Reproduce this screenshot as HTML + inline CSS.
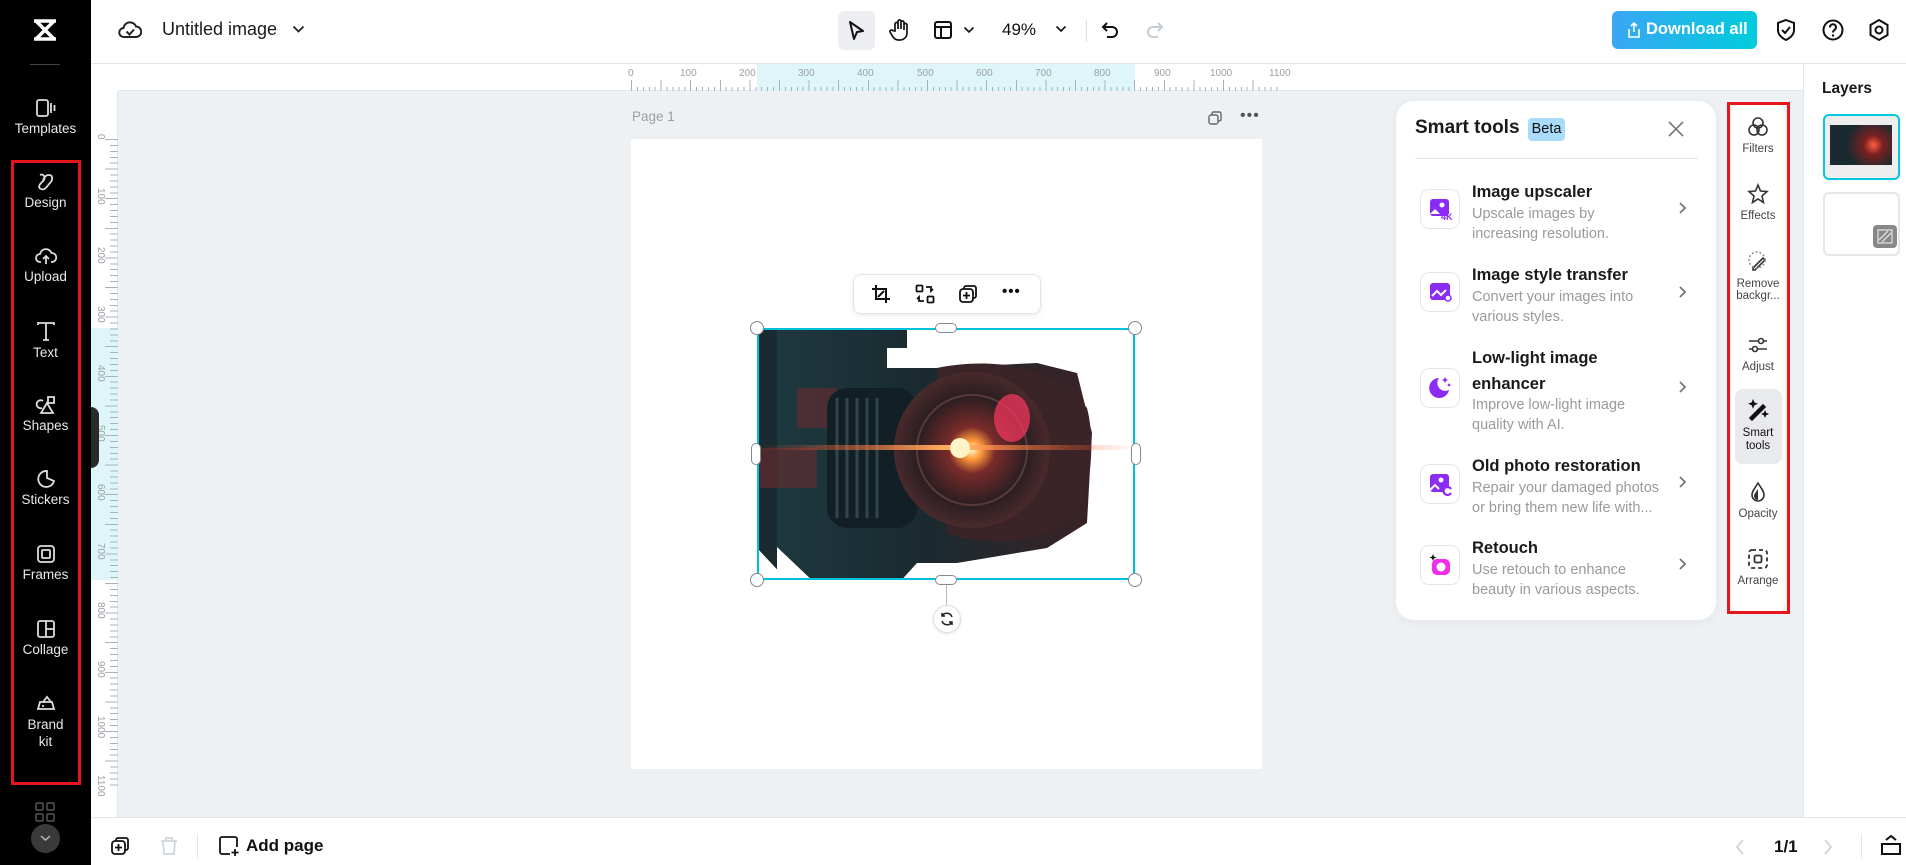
<!DOCTYPE html>
<html><head><meta charset="utf-8">
<style>
*{box-sizing:border-box;margin:0;padding:0}
body{width:1906px;height:865px;overflow:hidden;position:relative;background:#fff;font-family:"Liberation Sans",sans-serif;color:#1a1a1a}
.a{position:absolute}
.side{left:0;top:0;width:91px;height:865px;background:#000}
.si{position:absolute;left:0;width:91px;text-align:center;color:#e8e8e8;font-size:13.5px}
.si svg{display:block;margin:0 auto 3px}
.rl{font-size:10px;color:#9aa0a6;position:absolute}
.hr{left:118px;top:64px;width:1685px;height:27px;background:#fff;border-bottom:1px solid #e3e6ea}
.vr{left:91px;top:91px;width:27px;height:726px;background:#fff;border-right:1px solid #e3e6ea}
.tool{position:absolute;left:1731px;width:54px;text-align:center;font-size:11.5px;color:#444}
.tool svg{display:block;margin:0 auto}
.it{position:absolute;left:1420px;width:290px}
.ib{position:absolute;left:0;width:40px;height:40px;border:1px solid #e6e6e6;border-radius:9px;background:#fff}
.tt{position:absolute;left:52px;font-size:16.5px;font-weight:bold;color:#1a1a1a;line-height:25px;width:200px}
.dd{position:absolute;left:52px;font-size:14.5px;color:#9a9a9a;line-height:19.5px;width:200px}
.chev{position:absolute;left:258px}
.h{position:absolute;width:14px;height:14px;border-radius:50%;background:#fff;border:1.5px solid #7f8a94}
</style></head><body>

<!-- Left sidebar -->
<div class="a side"></div>
<svg class="a" style="left:31px;top:18px" width="28" height="24" viewBox="0 0 28 24"><path d="M3 3h22M3 21h22M5 3l9 9-9 9M23 3l-9 9 9 9" stroke="#fff" stroke-width="3.5" fill="none" stroke-linejoin="round"/></svg>
<div class="a" style="left:30px;top:64px;width:30px;height:1px;background:#444"></div>
<div class="si" style="top:98px"><svg width="22" height="20" viewBox="0 0 22 20"><rect x="2" y="2" width="11" height="16" rx="2" stroke="#ddd" stroke-width="1.8" fill="none"/><path d="M16 5v10M19.5 7v6" stroke="#ddd" stroke-width="1.8"/></svg>Templates</div>
<div class="si" style="top:172px"><svg width="22" height="20" viewBox="0 0 22 20"><path d="M5 3c4-2 6 3 3 6s-6 6-2 8 6-3 9-6 3-8-1-8-6 4-6 7" stroke="#ddd" stroke-width="1.8" fill="none"/></svg>Design</div>
<div class="si" style="top:246px"><svg width="24" height="20" viewBox="0 0 24 20"><path d="M7 16H6a4 4 0 010-8 6 6 0 0111.5-1A4.5 4.5 0 0118 16h-1M12 18v-8m-3 3l3-3 3 3" stroke="#ddd" stroke-width="1.8" fill="none"/></svg>Upload</div>
<div class="si" style="top:321px"><svg width="22" height="21" viewBox="0 0 22 21"><path d="M3 4V2h16v2M11 2v17M8 19h6" stroke="#ddd" stroke-width="1.8" fill="none"/></svg>Text</div>
<div class="si" style="top:395px"><svg width="22" height="20" viewBox="0 0 22 20"><path d="M8 6a4 4 0 10-1 7" stroke="#ddd" stroke-width="1.8" fill="none"/><path d="M13 2h6v6h-6zM12 8l-6 10h12z" stroke="#ddd" stroke-width="1.8" fill="none"/></svg>Shapes</div>
<div class="si" style="top:469px"><svg width="22" height="20" viewBox="0 0 22 20"><path d="M12 2a8 8 0 107 10l-7-3z" stroke="#ddd" stroke-width="1.8" fill="none"/></svg>Stickers</div>
<div class="si" style="top:544px"><svg width="22" height="20" viewBox="0 0 22 20"><rect x="3" y="2" width="16" height="16" rx="3" stroke="#ddd" stroke-width="1.8" fill="none"/><rect x="7" y="6" width="8" height="8" rx="1" stroke="#ddd" stroke-width="1.8" fill="none"/></svg>Frames</div>
<div class="si" style="top:619px"><svg width="22" height="20" viewBox="0 0 22 20"><rect x="3" y="2" width="16" height="16" rx="2" stroke="#ddd" stroke-width="1.8" fill="none"/><path d="M11 2v16M11 10h8" stroke="#ddd" stroke-width="1.8"/></svg>Collage</div>
<div class="si" style="top:693px;line-height:17px"><svg width="22" height="20" viewBox="0 0 22 20"><path d="M3 16h16l-2-7H5zM8 9l4-5 4 5M7 13h2" stroke="#ddd" stroke-width="1.8" fill="none"/></svg>Brand<br>kit</div>
<div class="a" style="left:11px;top:160px;width:70px;height:625px;border:3.5px solid #e8141b"></div>
<svg class="a" style="left:35px;top:802px" width="20" height="20" viewBox="0 0 20 20"><g stroke="#555" stroke-width="1.5" fill="none"><rect x="1" y="1" width="7" height="7" rx="1"/><rect x="12" y="1" width="7" height="7" rx="1"/><rect x="1" y="12" width="7" height="7" rx="1"/><rect x="12" y="12" width="7" height="7" rx="1"/></g></svg>
<div class="a" style="left:31px;top:824px;width:29px;height:29px;border-radius:50%;background:#3a3a3a"></div>
<svg class="a" style="left:40px;top:834px" width="11" height="8" viewBox="0 0 11 8"><path d="M1 2l4.5 4L10 2" stroke="#bbb" stroke-width="1.5" fill="none"/></svg>

<!-- Top bar -->
<div class="a" style="left:91px;top:0;width:1815px;height:64px;background:#fff;border-bottom:1px solid #e3e6ea"></div>
<svg class="a" style="left:118px;top:19px" width="24" height="22" viewBox="0 0 24 22"><path d="M6 18a4.5 4.5 0 01-.5-9A6.5 6.5 0 0118 7.5 5 5 0 0118 18z" stroke="#222" stroke-width="2" fill="none"/><path d="M8.5 12.5l3 3 4.5-5" stroke="#222" stroke-width="2" fill="none"/></svg>
<div class="a" style="left:162px;top:19px;font-size:18px;color:#1a1a1a">Untitled image</div>
<svg class="a" style="left:292px;top:25px" width="13" height="9" viewBox="0 0 13 9"><path d="M1.5 1.5l5 5 5-5" stroke="#222" stroke-width="1.8" fill="none"/></svg>

<div class="a" style="left:838px;top:11px;width:37px;height:39px;background:#eceef1;border-radius:6px"></div>
<svg class="a" style="left:846px;top:20px" width="20" height="22" viewBox="0 0 20 22"><path d="M4 2l13 9-6 1-3 7z" stroke="#111" stroke-width="2" fill="none" stroke-linejoin="round"/></svg>
<svg class="a" style="left:889px;top:18px" width="22" height="24" viewBox="0 0 22 24"><path d="M6 13V6a1.5 1.5 0 013 0v5V3.5a1.5 1.5 0 013 0V11V4.5a1.5 1.5 0 013 0V12V7a1.5 1.5 0 013 0v8a7 7 0 01-7 7h-1a7 7 0 01-6-3l-3-5a1.5 1.5 0 012.5-1.5z" stroke="#111" stroke-width="1.7" fill="none"/></svg>
<svg class="a" style="left:933px;top:20px" width="20" height="20" viewBox="0 0 20 20"><rect x="2" y="2" width="16" height="16" rx="2" stroke="#111" stroke-width="2" fill="none"/><path d="M2 7h16M8 7v11" stroke="#111" stroke-width="2"/></svg>
<svg class="a" style="left:963px;top:26px" width="12" height="8" viewBox="0 0 12 8"><path d="M1.5 1.5l4.5 4.5 4.5-4.5" stroke="#111" stroke-width="1.6" fill="none"/></svg>
<div class="a" style="left:1002px;top:20px;font-size:17px;color:#111">49%</div>
<svg class="a" style="left:1055px;top:25px" width="12" height="8" viewBox="0 0 12 8"><path d="M1.5 1.5l4.5 4.5 4.5-4.5" stroke="#111" stroke-width="1.6" fill="none"/></svg>
<div class="a" style="left:1086px;top:20px;width:1px;height:22px;background:#ddd"></div>
<svg class="a" style="left:1101px;top:20px" width="20" height="20" viewBox="0 0 20 20"><path d="M6 3L2 7l4 4M2 7h9a5 5 0 010 10H6" stroke="#111" stroke-width="2" fill="none"/></svg>
<svg class="a" style="left:1144px;top:20px" width="20" height="20" viewBox="0 0 20 20"><path d="M14 3l4 4-4 4M18 7H9a5 5 0 000 10h5" stroke="#c7cdd3" stroke-width="2" fill="none"/></svg>

<div class="a" style="left:1612px;top:11px;width:145px;height:38px;border-radius:6px;background:linear-gradient(90deg,#3aa6f4,#00ccdc)"></div>
<svg class="a" style="left:1627px;top:21px" width="14" height="18" viewBox="0 0 14 18"><path d="M7 11V2M4 5l3-3 3 3M2 8v8h10V8" stroke="#fff" stroke-width="1.6" fill="none"/></svg>
<div class="a" style="left:1646px;top:20px;font-size:16.5px;font-weight:bold;color:#fff">Download all</div>
<svg class="a" style="left:1775px;top:18px" width="22" height="24" viewBox="0 0 22 24"><path d="M11 2l8 3v7c0 5-4 8-8 10-4-2-8-5-8-10V5z" stroke="#111" stroke-width="2" fill="none"/><path d="M7 12l3 3 5-6" stroke="#111" stroke-width="2" fill="none"/></svg>
<svg class="a" style="left:1821px;top:18px" width="24" height="24" viewBox="0 0 24 24"><circle cx="12" cy="12" r="9.5" stroke="#111" stroke-width="2" fill="none"/><path d="M9 9.5a3 3 0 115 2c-1.5 1-2 1.5-2 3" stroke="#111" stroke-width="2" fill="none"/><circle cx="12" cy="17.5" r="1.2" fill="#111"/></svg>
<svg class="a" style="left:1867px;top:18px" width="24" height="24" viewBox="0 0 24 24"><path d="M12 2l8.5 5v10L12 22l-8.5-5V7z" stroke="#111" stroke-width="2" fill="none"/><circle cx="12" cy="12" r="3.5" stroke="#111" stroke-width="2" fill="none"/></svg>

<!-- Canvas area -->
<div class="a" style="left:118px;top:91px;width:1685px;height:726px;background:#eef1f4"></div>
<div class="a hr"></div>
<div class="a" style="left:757px;top:64px;width:378px;height:27px;background:#def6f9"></div>
<div class="a" style="left:631px;top:82px;width:651px;height:9px;background:repeating-linear-gradient(90deg,#aab1b8 0 1px,transparent 1px 5.92px);clip-path:inset(5px 0 0 0)"></div>
<div class="a" style="left:631px;top:80px;width:651px;height:11px;background:repeating-linear-gradient(90deg,#aab1b8 0 1px,transparent 1px 29.6px)"></div>
<div class="rl" style="left:628px;top:68px">0</div>
<div class="rl" style="left:680px;top:68px">100</div>
<div class="rl" style="left:739px;top:68px">200</div>
<div class="rl" style="left:798px;top:68px">300</div>
<div class="rl" style="left:857px;top:68px">400</div>
<div class="rl" style="left:917px;top:68px">500</div>
<div class="rl" style="left:976px;top:68px">600</div>
<div class="rl" style="left:1035px;top:68px">700</div>
<div class="rl" style="left:1094px;top:68px">800</div>
<div class="rl" style="left:1154px;top:68px">900</div>
<div class="rl" style="left:1210px;top:68px">1000</div>
<div class="rl" style="left:1269px;top:68px">1100</div>
<div class="a vr"></div>
<div class="a" style="left:91px;top:328px;width:27px;height:252px;background:#def6f9"></div>
<div class="a" style="left:110px;top:139px;width:8px;height:651px;background:repeating-linear-gradient(180deg,#aab1b8 0 1px,transparent 1px 5.92px)"></div>
<div class="a" style="left:105px;top:139px;width:13px;height:651px;background:repeating-linear-gradient(180deg,#aab1b8 0 1px,transparent 1px 29.6px)"></div>
<div style="position:absolute;left:0;top:0">
<div class="rl" style="top:134px;transform:rotate(90deg);transform-origin:left top;left:106px">0</div>
<div class="rl" style="left:106px;top:188px;transform:rotate(90deg);transform-origin:left top">100</div>
<div class="rl" style="left:106px;top:247px;transform:rotate(90deg);transform-origin:left top">200</div>
<div class="rl" style="left:106px;top:306px;transform:rotate(90deg);transform-origin:left top">300</div>
<div class="rl" style="left:106px;top:365px;transform:rotate(90deg);transform-origin:left top">400</div>
<div class="rl" style="left:106px;top:425px;transform:rotate(90deg);transform-origin:left top">500</div>
<div class="rl" style="left:106px;top:484px;transform:rotate(90deg);transform-origin:left top">600</div>
<div class="rl" style="left:106px;top:543px;transform:rotate(90deg);transform-origin:left top">700</div>
<div class="rl" style="left:106px;top:602px;transform:rotate(90deg);transform-origin:left top">800</div>
<div class="rl" style="left:106px;top:661px;transform:rotate(90deg);transform-origin:left top">900</div>
<div class="rl" style="left:106px;top:716px;transform:rotate(90deg);transform-origin:left top">1000</div>
<div class="rl" style="left:106px;top:775px;transform:rotate(90deg);transform-origin:left top">1100</div>
</div>
<div class="a" style="left:91px;top:407px;width:8px;height:61px;background:#2a2a2a;border-radius:0 8px 8px 0"></div>

<div class="a" style="left:632px;top:109px;font-size:13.5px;color:#9aa0a6">Page 1</div>
<svg class="a" style="left:1207px;top:110px" width="16" height="16" viewBox="0 0 16 16"><rect x="2" y="5" width="9" height="9" rx="2" stroke="#666" stroke-width="1.4" fill="none"/><path d="M5 5V3.5A1.5 1.5 0 016.5 2H12.5A1.5 1.5 0 0114 3.5V9.5A1.5 1.5 0 0112.5 11H11" stroke="#666" stroke-width="1.4" fill="none"/></svg>
<div class="a" style="left:1240px;top:107px;font-size:16px;color:#555;letter-spacing:1px">•••</div>
<div class="a" style="left:631px;top:139px;width:631px;height:630px;background:#fff"></div>

<!-- Image -->
<svg class="a" style="left:757px;top:328px" width="378" height="252" viewBox="0 0 378 252">
<defs>
<radialGradient id="lens" cx="0.5" cy="0.5" r="0.5"><stop offset="0" stop-color="#fff3c0"/><stop offset="0.12" stop-color="#ff9a3a"/><stop offset="0.3" stop-color="#7a2b2a"/><stop offset="0.7" stop-color="#2a1e22"/><stop offset="1" stop-color="#4a2a2c"/></radialGradient>
<linearGradient id="body" x1="0" x2="1"><stop offset="0" stop-color="#1d3a40"/><stop offset="0.5" stop-color="#1a2a30"/><stop offset="1" stop-color="#3a2226"/></linearGradient>
<linearGradient id="flare" x1="0" x2="1"><stop offset="0" stop-color="#ff4020" stop-opacity="0"/><stop offset="0.5" stop-color="#ffb060"/><stop offset="1" stop-color="#ff4020" stop-opacity="0"/></linearGradient>
</defs>
<path d="M0 0h150v20h-20v20l50 0 100 -5 40 10 15 60 -5 90-40 25-60 10-30 5h-40l-20 22H60L0 200z" fill="url(#body)"/>
<path d="M0 0h20v252H0z" fill="#1b2a30"/>
<path d="M40 60h40v40H40zM0 120h60v40H0z" fill="#6a2c2e" opacity="0.6"/>
<rect x="70" y="60" width="90" height="140" rx="20" fill="#122026"/>
<path d="M80 70v120M90 70v120M100 70v120M110 70v120M120 70v120" stroke="#30454c" stroke-width="3"/>
<path d="M180 40c60-12 120 0 150 40 8 30 5 80-10 105-30 30-90 35-130 20z" fill="#3a2428"/>
<circle cx="215" cy="122" r="78" fill="url(#lens)"/>
<circle cx="215" cy="122" r="55" fill="none" stroke="#5a3a38" stroke-width="2"/>
<ellipse cx="255" cy="90" rx="18" ry="24" fill="#ff3860" opacity="0.7"/>
<rect x="0" y="117" width="378" height="5" fill="url(#flare)"/>
<circle cx="203" cy="120" r="10" fill="#fff4c8"/>
<path d="M0 220l30 32H0z" fill="#fff"/>
</svg>
<div class="a" style="left:757px;top:328px;width:378px;height:252px;border:2px solid #00c0dc"></div>
<div class="h" style="left:750px;top:321px"></div>
<div class="h" style="left:1128px;top:321px"></div>
<div class="h" style="left:750px;top:573px"></div>
<div class="h" style="left:1128px;top:573px"></div>
<div class="h" style="left:935px;top:323px;width:22px;height:10px;border-radius:5px"></div>
<div class="h" style="left:935px;top:575px;width:22px;height:10px;border-radius:5px"></div>
<div class="h" style="left:751px;top:443px;width:10px;height:22px;border-radius:5px"></div>
<div class="h" style="left:1131px;top:443px;width:10px;height:22px;border-radius:5px"></div>
<div class="a" style="left:946px;top:585px;width:1px;height:20px;background:#bbb"></div>
<div class="a" style="left:933px;top:605px;width:28px;height:28px;border-radius:50%;background:#fff;border:1px solid #ddd;box-shadow:0 1px 3px rgba(0,0,0,.1)"></div>
<svg class="a" style="left:939px;top:611px" width="16" height="16" viewBox="0 0 16 16"><path d="M13 6a5.5 5.5 0 00-10-1M3 10a5.5 5.5 0 0010 1M3 2v3h3M13 14v-3h-3" stroke="#222" stroke-width="1.5" fill="none"/></svg>

<div class="a" style="left:853px;top:274px;width:188px;height:40px;background:#fff;border:1px solid #e2e5e8;border-radius:8px;box-shadow:0 2px 6px rgba(0,0,0,.08)"></div>
<svg class="a" style="left:871px;top:284px" width="20" height="20" viewBox="0 0 20 20"><path d="M5 1v14h14M1 5h14v14M7 13l6-6" stroke="#111" stroke-width="2" fill="none"/></svg>
<svg class="a" style="left:915px;top:284px" width="20" height="20" viewBox="0 0 20 20"><g stroke="#111" stroke-width="1.8" fill="none"><rect x="1.5" y="1.5" width="6" height="6" rx="1"/><rect x="12.5" y="12.5" width="6" height="6" rx="1"/><path d="M11 3h5v4l2-2M9 17H4v-4l-2 2"/></g></svg>
<svg class="a" style="left:958px;top:284px" width="20" height="20" viewBox="0 0 20 20"><rect x="2" y="5" width="13" height="13" rx="3" stroke="#111" stroke-width="1.8" fill="none"/><path d="M6 5V4a2 2 0 012-2h8a2 2 0 012 2v8a2 2 0 01-2 2h-1M8.5 8v7M5 11.5h7" stroke="#111" stroke-width="1.8" fill="none"/></svg>
<div class="a" style="left:1002px;top:283px;font-size:15px;font-weight:bold;color:#111;letter-spacing:1px">•••</div>

<!-- Smart tools panel -->
<div class="a" style="left:1396px;top:101px;width:320px;height:519px;background:#fff;border-radius:18px;box-shadow:0 2px 10px rgba(0,0,0,.05)"></div>
<div class="a" style="left:1415px;top:117px;font-size:19px;font-weight:bold">Smart tools</div>
<div class="a" style="left:1528px;top:118px;width:37px;height:23px;background:#a9dcfb;border-radius:4px;font-size:14.5px;text-align:center;line-height:23px;color:#111">Beta</div>
<svg class="a" style="left:1668px;top:121px" width="16" height="16" viewBox="0 0 16 16"><path d="M1 1l14 14M15 1L1 15" stroke="#777" stroke-width="1.6"/></svg>
<div class="a" style="left:1415px;top:158px;width:283px;height:1px;background:#e6e6e6"></div>

<div class="it" style="top:180px"><div class="ib" style="top:9px"><svg width="38" height="38" viewBox="0 0 38 38"><rect x="9" y="9" width="19" height="17" rx="3" fill="#8b2cf5"/><circle cx="21" cy="15" r="2.5" fill="#fff"/><path d="M9 24l5-5 5 5" fill="#fff"/><text x="20" y="30" font-size="9" font-weight="bold" fill="#8b2cf5" font-family="Liberation Sans">4K</text></svg></div>
<div class="tt" style="top:0">Image upscaler</div><div class="dd" style="top:25px">Upscale images by<br>increasing resolution.</div>
<svg class="chev" style="top:21px" width="10" height="14" viewBox="0 0 10 14"><path d="M2 2l5 5-5 5" stroke="#777" stroke-width="1.8" fill="none"/></svg></div>

<div class="it" style="top:263px"><div class="ib" style="top:9px"><svg width="38" height="38" viewBox="0 0 38 38"><rect x="9" y="10" width="20" height="17" rx="3" fill="#8b2cf5"/><path d="M11 23l5-5 4 4 5-5" stroke="#fff" stroke-width="2" fill="none"/><circle cx="27" cy="25" r="3" fill="#fff" stroke="#8b2cf5" stroke-width="1.5"/></svg></div>
<div class="tt" style="top:0">Image style transfer</div><div class="dd" style="top:25px">Convert your images into<br>various styles.</div>
<svg class="chev" style="top:22px" width="10" height="14" viewBox="0 0 10 14"><path d="M2 2l5 5-5 5" stroke="#777" stroke-width="1.8" fill="none"/></svg></div>

<div class="it" style="top:345px"><div class="ib" style="top:23px"><svg width="38" height="38" viewBox="0 0 38 38"><path d="M18 9a10 10 0 1010 12A8 8 0 0118 9z" fill="#8b2cf5"/><path d="M24 8l1 2 2 1-2 1-1 2-1-2-2-1 2-1zM28 14l.7 1.3 1.3.7-1.3.7-.7 1.3-.7-1.3-1.3-.7 1.3-.7z" fill="#8b2cf5"/></svg></div>
<div class="tt" style="top:0;line-height:26px">Low-light image<br>enhancer</div><div class="dd" style="top:51px">Improve low-light image<br>quality with AI.</div>
<svg class="chev" style="top:35px" width="10" height="14" viewBox="0 0 10 14"><path d="M2 2l5 5-5 5" stroke="#777" stroke-width="1.8" fill="none"/></svg></div>

<div class="it" style="top:454px"><div class="ib" style="top:10px"><svg width="38" height="38" viewBox="0 0 38 38"><rect x="9" y="9" width="19" height="18" rx="3" fill="#8b2cf5"/><circle cx="20" cy="15" r="2.5" fill="#fff"/><path d="M9 25l5-5 4 4" stroke="#fff" stroke-width="2" fill="none"/><path d="M30 24a4 4 0 10 0 4" stroke="#8b2cf5" stroke-width="2.2" fill="#fff"/></svg></div>
<div class="tt" style="top:0">Old photo restoration</div><div class="dd" style="top:25px">Repair your damaged photos<br>or bring them new life with...</div>
<svg class="chev" style="top:21px" width="10" height="14" viewBox="0 0 10 14"><path d="M2 2l5 5-5 5" stroke="#777" stroke-width="1.8" fill="none"/></svg></div>

<div class="it" style="top:536px"><div class="ib" style="top:9px"><svg width="38" height="38" viewBox="0 0 38 38"><rect x="11" y="13" width="18" height="16" rx="5" fill="#f02ee8"/><circle cx="20" cy="21" r="4.5" fill="#fff"/><path d="M12 8l1 2.5 2.5 1-2.5 1-1 2.5-1-2.5-2.5-1 2.5-1z" fill="#111"/></svg></div>
<div class="tt" style="top:0">Retouch</div><div class="dd" style="top:25px">Use retouch to enhance<br>beauty in various aspects.</div>
<svg class="chev" style="top:21px" width="10" height="14" viewBox="0 0 10 14"><path d="M2 2l5 5-5 5" stroke="#777" stroke-width="1.8" fill="none"/></svg></div>

<!-- Right tool strip -->
<div class="a" style="left:1731px;top:105px;width:54px;height:506px;background:#fff;border-radius:8px"></div>
<div class="a" style="left:1735px;top:389px;width:47px;height:75px;background:#e8eaed;border-radius:8px"></div>
<div class="tool" style="top:116px"><svg width="22" height="22" viewBox="0 0 22 22"><g stroke="#333" stroke-width="1.6" fill="none"><circle cx="11" cy="7" r="5"/><circle cx="7" cy="14" r="5"/><circle cx="15" cy="14" r="5"/></g></svg><div style="margin-top:5px">Filters</div></div>
<div class="tool" style="top:183px"><svg width="22" height="22" viewBox="0 0 22 22"><path d="M11 2l2.5 6 6.5.5-5 4.5 1.5 6.5-5.5-3.5-5.5 3.5 1.5-6.5-5-4.5 6.5-.5z" stroke="#333" stroke-width="1.6" fill="none"/></svg><div style="margin-top:5px">Effects</div></div>
<div class="tool" style="top:250px;line-height:12px"><svg width="22" height="22" viewBox="0 0 22 22"><path d="M6 18l10-10 2 2-10 10H6z" stroke="#333" stroke-width="1.6" fill="none"/><circle cx="10" cy="10" r="8" stroke="#888" stroke-width="1.4" stroke-dasharray="2 2" fill="none"/></svg><div style="margin-top:6px">Remove<br>backgr...</div></div>
<div class="tool" style="top:334px"><svg width="22" height="22" viewBox="0 0 22 22"><g stroke="#333" stroke-width="1.6" fill="none"><path d="M2 7h18M2 15h18"/><circle cx="14" cy="7" r="2.5" fill="#fff"/><circle cx="8" cy="15" r="2.5" fill="#fff"/></g></svg><div style="margin-top:5px">Adjust</div></div>
<div class="tool" style="top:399px;line-height:13px;color:#111"><svg width="22" height="22" viewBox="0 0 22 22"><path d="M3 19L16 6l2 2L5 21zM6 2l.8 2 2 .8-2 .8L6 7.6l-.8-2-2-.8 2-.8zM18 13l.6 1.4 1.4.6-1.4.6L18 17l-.6-1.4-1.4-.6 1.4-.6z" stroke="#111" stroke-width="1.6" fill="#111"/></svg><div style="margin-top:6px">Smart<br>tools</div></div>
<div class="tool" style="top:481px"><svg width="22" height="22" viewBox="0 0 22 22"><path d="M11 2c-3 5-6 8-6 12a6 6 0 0012 0c0-4-3-7-6-12z" stroke="#333" stroke-width="1.6" fill="none"/><path d="M11 8c-2 3-4 5-4 7a4 4 0 004 4z" fill="#333"/></svg><div style="margin-top:5px">Opacity</div></div>
<div class="tool" style="top:548px"><svg width="22" height="22" viewBox="0 0 22 22"><rect x="2" y="2" width="18" height="18" rx="3" stroke="#333" stroke-width="1.8" stroke-dasharray="4 3" fill="none"/><rect x="7.5" y="7.5" width="7" height="7" rx="1.5" stroke="#333" stroke-width="1.8" fill="none"/></svg><div style="margin-top:5px">Arrange</div></div>
<div class="a" style="left:1727px;top:102px;width:63px;height:512px;border:3.5px solid #e8141b"></div>

<!-- Layers panel -->
<div class="a" style="left:1803px;top:64px;width:1px;height:753px;background:#e3e6ea"></div>
<div class="a" style="left:1822px;top:80px;font-size:15.5px;font-weight:bold">Layers</div>
<div class="a" style="left:1823px;top:114px;width:77px;height:66px;border:2.5px solid #00c8e0;border-radius:6px;background:#eee;overflow:hidden">
<div style="position:absolute;left:5px;top:9px;width:62px;height:40px;background:radial-gradient(circle at 70% 50%,#ff6040 0,#7a2020 20%,#1a2a30 55%);"></div></div>
<div class="a" style="left:1823px;top:192px;width:77px;height:64px;border:2px solid #e4e8ec;border-radius:6px;background:#fff"></div>
<div class="a" style="left:1873px;top:225px;width:24px;height:23px;background:#888;border-radius:4px"></div>
<svg class="a" style="left:1877px;top:229px" width="16" height="15" viewBox="0 0 16 15"><rect x="1" y="1" width="14" height="13" stroke="#ddd" stroke-width="1.3" fill="none"/><path d="M2 11l9-9M5 13l9-9" stroke="#ddd" stroke-width="1.3"/></svg>

<!-- Bottom bar -->
<div class="a" style="left:91px;top:817px;width:1815px;height:48px;background:#fff;border-top:1px solid #e3e6ea"></div>
<svg class="a" style="left:110px;top:836px" width="20" height="20" viewBox="0 0 20 20"><rect x="2" y="5" width="13" height="13" rx="3" stroke="#111" stroke-width="1.8" fill="none"/><path d="M6 5V4a2 2 0 012-2h8a2 2 0 012 2v8a2 2 0 01-2 2h-1M8.5 8v7M5 11.5h7" stroke="#111" stroke-width="1.8" fill="none"/></svg>
<svg class="a" style="left:159px;top:836px" width="20" height="20" viewBox="0 0 20 20"><path d="M2 5h16M7 5V2h6v3M4 5l1 13h10l1-13" stroke="#cfd5db" stroke-width="1.8" fill="none"/></svg>
<div class="a" style="left:197px;top:834px;width:1px;height:24px;background:#e3e6ea"></div>
<svg class="a" style="left:218px;top:835px" width="22" height="22" viewBox="0 0 22 22"><path d="M12 19H4a2 2 0 01-2-2V4a2 2 0 012-2h13a2 2 0 012 2v8M17 14v7M13.5 17.5h7" stroke="#111" stroke-width="1.8" fill="none"/></svg>
<div class="a" style="left:246px;top:836px;font-size:17px;font-weight:bold;color:#111">Add page</div>
<svg class="a" style="left:1734px;top:838px" width="12" height="18" viewBox="0 0 12 18"><path d="M9 2L3 9l6 7" stroke="#cfd5db" stroke-width="1.8" fill="none"/></svg>
<div class="a" style="left:1774px;top:837px;font-size:17px;font-weight:bold;color:#111">1/1</div>
<svg class="a" style="left:1822px;top:838px" width="12" height="18" viewBox="0 0 12 18"><path d="M3 2l6 7-6 7" stroke="#cfd5db" stroke-width="1.8" fill="none"/></svg>
<div class="a" style="left:1861px;top:834px;width:1px;height:24px;background:#e3e6ea"></div>
<svg class="a" style="left:1880px;top:834px" width="22" height="22" viewBox="0 0 22 22"><path d="M2 10h18v10H2zM6 6l5-4 5 4" stroke="#111" stroke-width="2" fill="none"/></svg>
</body></html>
